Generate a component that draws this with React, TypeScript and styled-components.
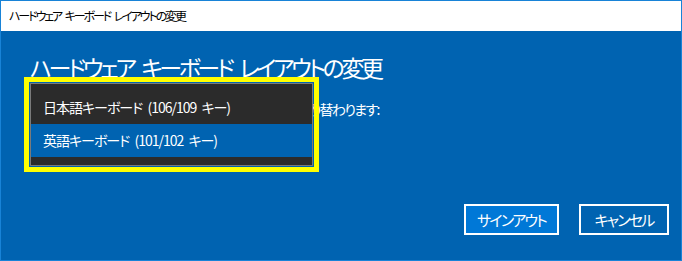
import styled, { createGlobalStyle } from 'styled-components';

const GlobalStyle = createGlobalStyle`
    html, body {
        margin: 0;
        padding: 0;
        background: #ffffff;
    }
    body {
        font-family: "Noto Sans CJK JP", "Noto Sans", sans-serif;
        font-feature-settings: "palt";
    }
`;

const Window = styled.div`
    position: relative;
    width: 682px;
    height: 261px;
    box-sizing: border-box;
    border: 1px solid #1883d7;
    display: flex;
    flex-direction: column;
    overflow: hidden;
`;

const TitleBar = styled.div`
    height: 30px;
    flex: none;
    background: #ffffff;
    color: #000000;
    font-size: 12px;
    letter-spacing: -2.1px;
    word-spacing: 3px;
    line-height: 30px;
    padding-left: 8px;
`;

const Body = styled.div`
    flex: 1;
    background: #0063b1;
    color: #ffffff;
    display: flex;
    flex-direction: column;
    padding: 18px 12px 25px 29px;
`;

const Heading = styled.h1`
    margin: 0;
    font-size: 23px;
    font-weight: 400;
    letter-spacing: -3.4px;
    word-spacing: 6px;
    line-height: 36px;
`;

const Label = styled.p`
    margin: 14px 0 0;
    font-size: 14px;
    letter-spacing: -1.7px;
    word-spacing: 6.5px;
    line-height: 20px;
    white-space: nowrap;
`;

const Combo = styled.div`
    margin-top: 13px;
    width: 280px;
    height: 32px;
    box-sizing: border-box;
    border: 2px solid #ffffff;
`;

const Actions = styled.div`
    margin-top: auto;
    display: flex;
    justify-content: flex-end;
    gap: 20px;
`;

const Button = styled.button<{ $primary?: boolean }>`
    height: 31px;
    width: ${p => (p.$primary ? '95px' : '90px')};
    box-sizing: border-box;
    border: 2px solid #ffffff;
    background: ${p => (p.$primary ? '#0078d7' : 'transparent')};
    color: #ffffff;
    font-family: inherit;
    font-feature-settings: "palt";
    font-size: 15px;
    letter-spacing: -1.8px;
    padding: 0;
`;

const Highlight = styled.div`
    position: absolute;
    left: 23px;
    top: 76px;
    width: 295px;
    height: 95px;
    box-sizing: border-box;
    border: 5px solid #ffff00;
    padding: 1px;
`;

const Menu = styled.ul`
    margin: 0;
    height: 100%;
    box-sizing: border-box;
    list-style: none;
    background: #2b2b2b;
    border: 1px solid #7a7a7a;
    padding: 7px 0 8px;
`;

const Item = styled.li<{ $selected?: boolean }>`
    height: 33px;
    line-height: 33px;
    padding-left: 12px;
    font-size: 14px;
    letter-spacing: -1px;
    word-spacing: 3px;
    color: #ffffff;
    background: ${p => (p.$selected ? '#0063b1' : 'transparent')};
    white-space: nowrap;
`;

const App = () => {
    return (
        <>
            <GlobalStyle />
            <Window>
                <TitleBar>ハードウェア キーボード レイアウトの変更</TitleBar>
                <Body>
                    <Heading>ハードウェア キーボード レイアウトの変更</Heading>
                    <Label>ハードウェア キーボード レイアウトは、次のものに切り替わります:</Label>
                    <Combo />
                    <Actions>
                        <Button $primary>サインアウト</Button>
                        <Button>キャンセル</Button>
                    </Actions>
                </Body>
                <Highlight>
                    <Menu>
                        <Item>日本語キーボード (106/109 キー)</Item>
                        <Item $selected>英語キーボード (101/102 キー)</Item>
                    </Menu>
                </Highlight>
            </Window>
        </>
    );
};

export default App;
